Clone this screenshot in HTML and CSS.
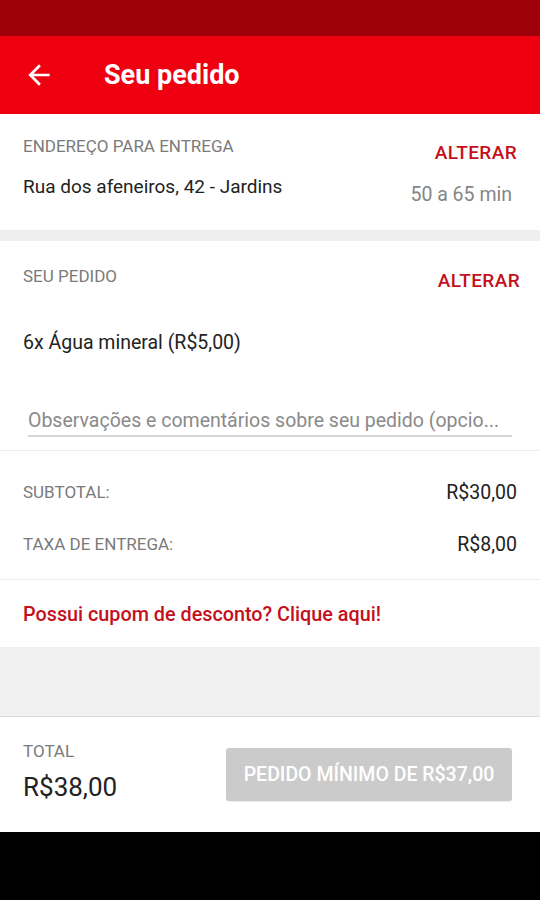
FILE: index.html
```html
<!DOCTYPE html>
<html lang="pt-BR">
<head>
<meta charset="utf-8">
<title>Seu pedido</title>
<link rel="stylesheet" href="styles.css">
</head>
<body>
<div class="screen">
  <div class="statusbar"></div>
  <header class="appbar">
    <svg class="back" width="32" height="32" viewBox="0 0 24 24"><path d="M20 11H7.83l5.59-5.59L12 4l-8 8 8 8 1.41-1.41L7.83 13H20v-2z" fill="#fff"/></svg>
    <h1 class="title">Seu pedido</h1>
  </header>

  <section class="card address">
    <div class="col">
      <div class="label">ENDEREÇO PARA ENTREGA</div>
      <div class="addr">Rua dos afeneiros, 42 - Jardins</div>
    </div>
    <div class="col right">
      <div class="link">ALTERAR</div>
      <div class="time">50 a 65 min</div>
    </div>
  </section>

  <div class="gap"></div>

  <section class="card order">
    <div class="order-head">
      <div class="label">SEU PEDIDO</div>
      <div class="link">ALTERAR</div>
    </div>
    <div class="item">6x Água mineral (R$5,00)</div>
    <div class="obs">Observações e comentários sobre seu pedido (opcio...</div>
  </section>

  <section class="card sums">
    <div class="row"><span class="label">SUBTOTAL:</span><span class="val">R$30,00</span></div>
    <div class="row"><span class="label">TAXA DE ENTREGA:</span><span class="val">R$8,00</span></div>
  </section>

  <section class="card coupon">
    <span class="coupon-link">Possui cupom de desconto? Clique aqui!</span>
  </section>

  <div class="filler"></div>

  <footer class="bottom">
    <div class="total">
      <div class="label">TOTAL</div>
      <div class="total-val">R$38,00</div>
    </div>
    <div class="btn">PEDIDO MÍNIMO DE R$37,00</div>
  </footer>

  <div class="navbar"></div>
</div>
</body>
</html>
```

FILE: styles.css
```css
* { box-sizing: border-box; margin: 0; padding: 0; }
html, body { background: #000; }
body {
  font-family: Roboto, "Noto Sans", "Liberation Sans", sans-serif;
  color: #222;
}
.screen {
  width: 540px;
  height: 900px;
  display: flex;
  flex-direction: column;
  background: #f1f1f1;
  overflow: hidden;
}
.statusbar { height: 36px; background: #9e0009; flex: none; }
.appbar {
  height: 78px;
  flex: none;
  background: #ee0011;
  display: flex;
  align-items: center;
  padding-left: 23px;
}
.back { flex: none; }
.title {
  margin-left: 49px;
  color: #fff;
  font-size: 27px;
  font-weight: 700;
  line-height: 32px;
}
.card { background: #fff; flex: none; }
.label {
  font-size: 17px;
  color: #7a7a7a;
  line-height: 20px;
}
.link {
  font-size: 19px;
  font-weight: 500;
  color: #c3101c;
  line-height: 20px;
  letter-spacing: 0.4px;
}
.address {
  height: 116px;
  display: flex;
  justify-content: space-between;
  padding: 22px 23px 0 23px;
}
.address .col { display: flex; flex-direction: column; }
.addr { font-size: 19px; line-height: 22px; margin-top: 20px; color: #222; }
.address .right { align-items: flex-end; padding-top: 7px; }
.time { font-size: 19.5px; line-height: 22px; margin-top: 21px; color: #858585; margin-right: 5px; }
.gap { height: 11px; flex: none; background: #efefef; }
.order {
  height: 210px;
  padding: 25px 20px 0 23px;
  border-bottom: 1px solid #ececec;
}
.order-head { display: flex; justify-content: space-between; align-items: flex-start; }
.order-head .link { margin-top: 5px; }
.item { font-size: 19.5px; line-height: 22px; margin-top: 41px; color: #222; }
.obs {
  margin-top: 56px;
  margin-left: 5px;
  margin-right: 8px;
  font-size: 19.5px;
  line-height: 22px;
  color: #8a8a8a;
  padding-bottom: 3px;
  border-bottom: 2px solid #d6d6d6;
  white-space: nowrap;
  overflow: hidden;
}
.sums {
  height: 129px;
  padding: 30px 23px 0 23px;
  border-bottom: 1px solid #ececec;
  display: flex;
  flex-direction: column;
  gap: 30px;
}
.row { display: flex; justify-content: space-between; align-items: center; height: 22px; }
.val { font-size: 19.5px; color: #222; }
.coupon {
  height: 67px;
  padding: 24px 23px 0 23px;
}
.coupon-link { font-size: 19.8px; font-weight: 500; color: #c3101c; line-height: 22px; }
.filler { flex: none; height: 70px; border-bottom: 1px solid #dcdcdc; }
.bottom {
  height: 115px;
  flex: none;
  background: #fff;
  display: flex;
  justify-content: space-between;
  padding: 24px 28px 0 23px;
}
.total .label { line-height: 20px; }
.total-val { font-size: 26px; line-height: 30px; margin-top: 11px; color: #222; }
.btn {
  margin-top: 7px;
  width: 286px;
  height: 53px;
  background: #cbcbcb;
  border-radius: 3px;
  color: #fff;
  font-size: 19.5px;
  font-weight: 500;
  display: flex;
  align-items: center;
  justify-content: center;
  box-shadow: 0 1px 1px rgba(0,0,0,0.08);
}
.navbar { flex: 1; background: #000; }
```
